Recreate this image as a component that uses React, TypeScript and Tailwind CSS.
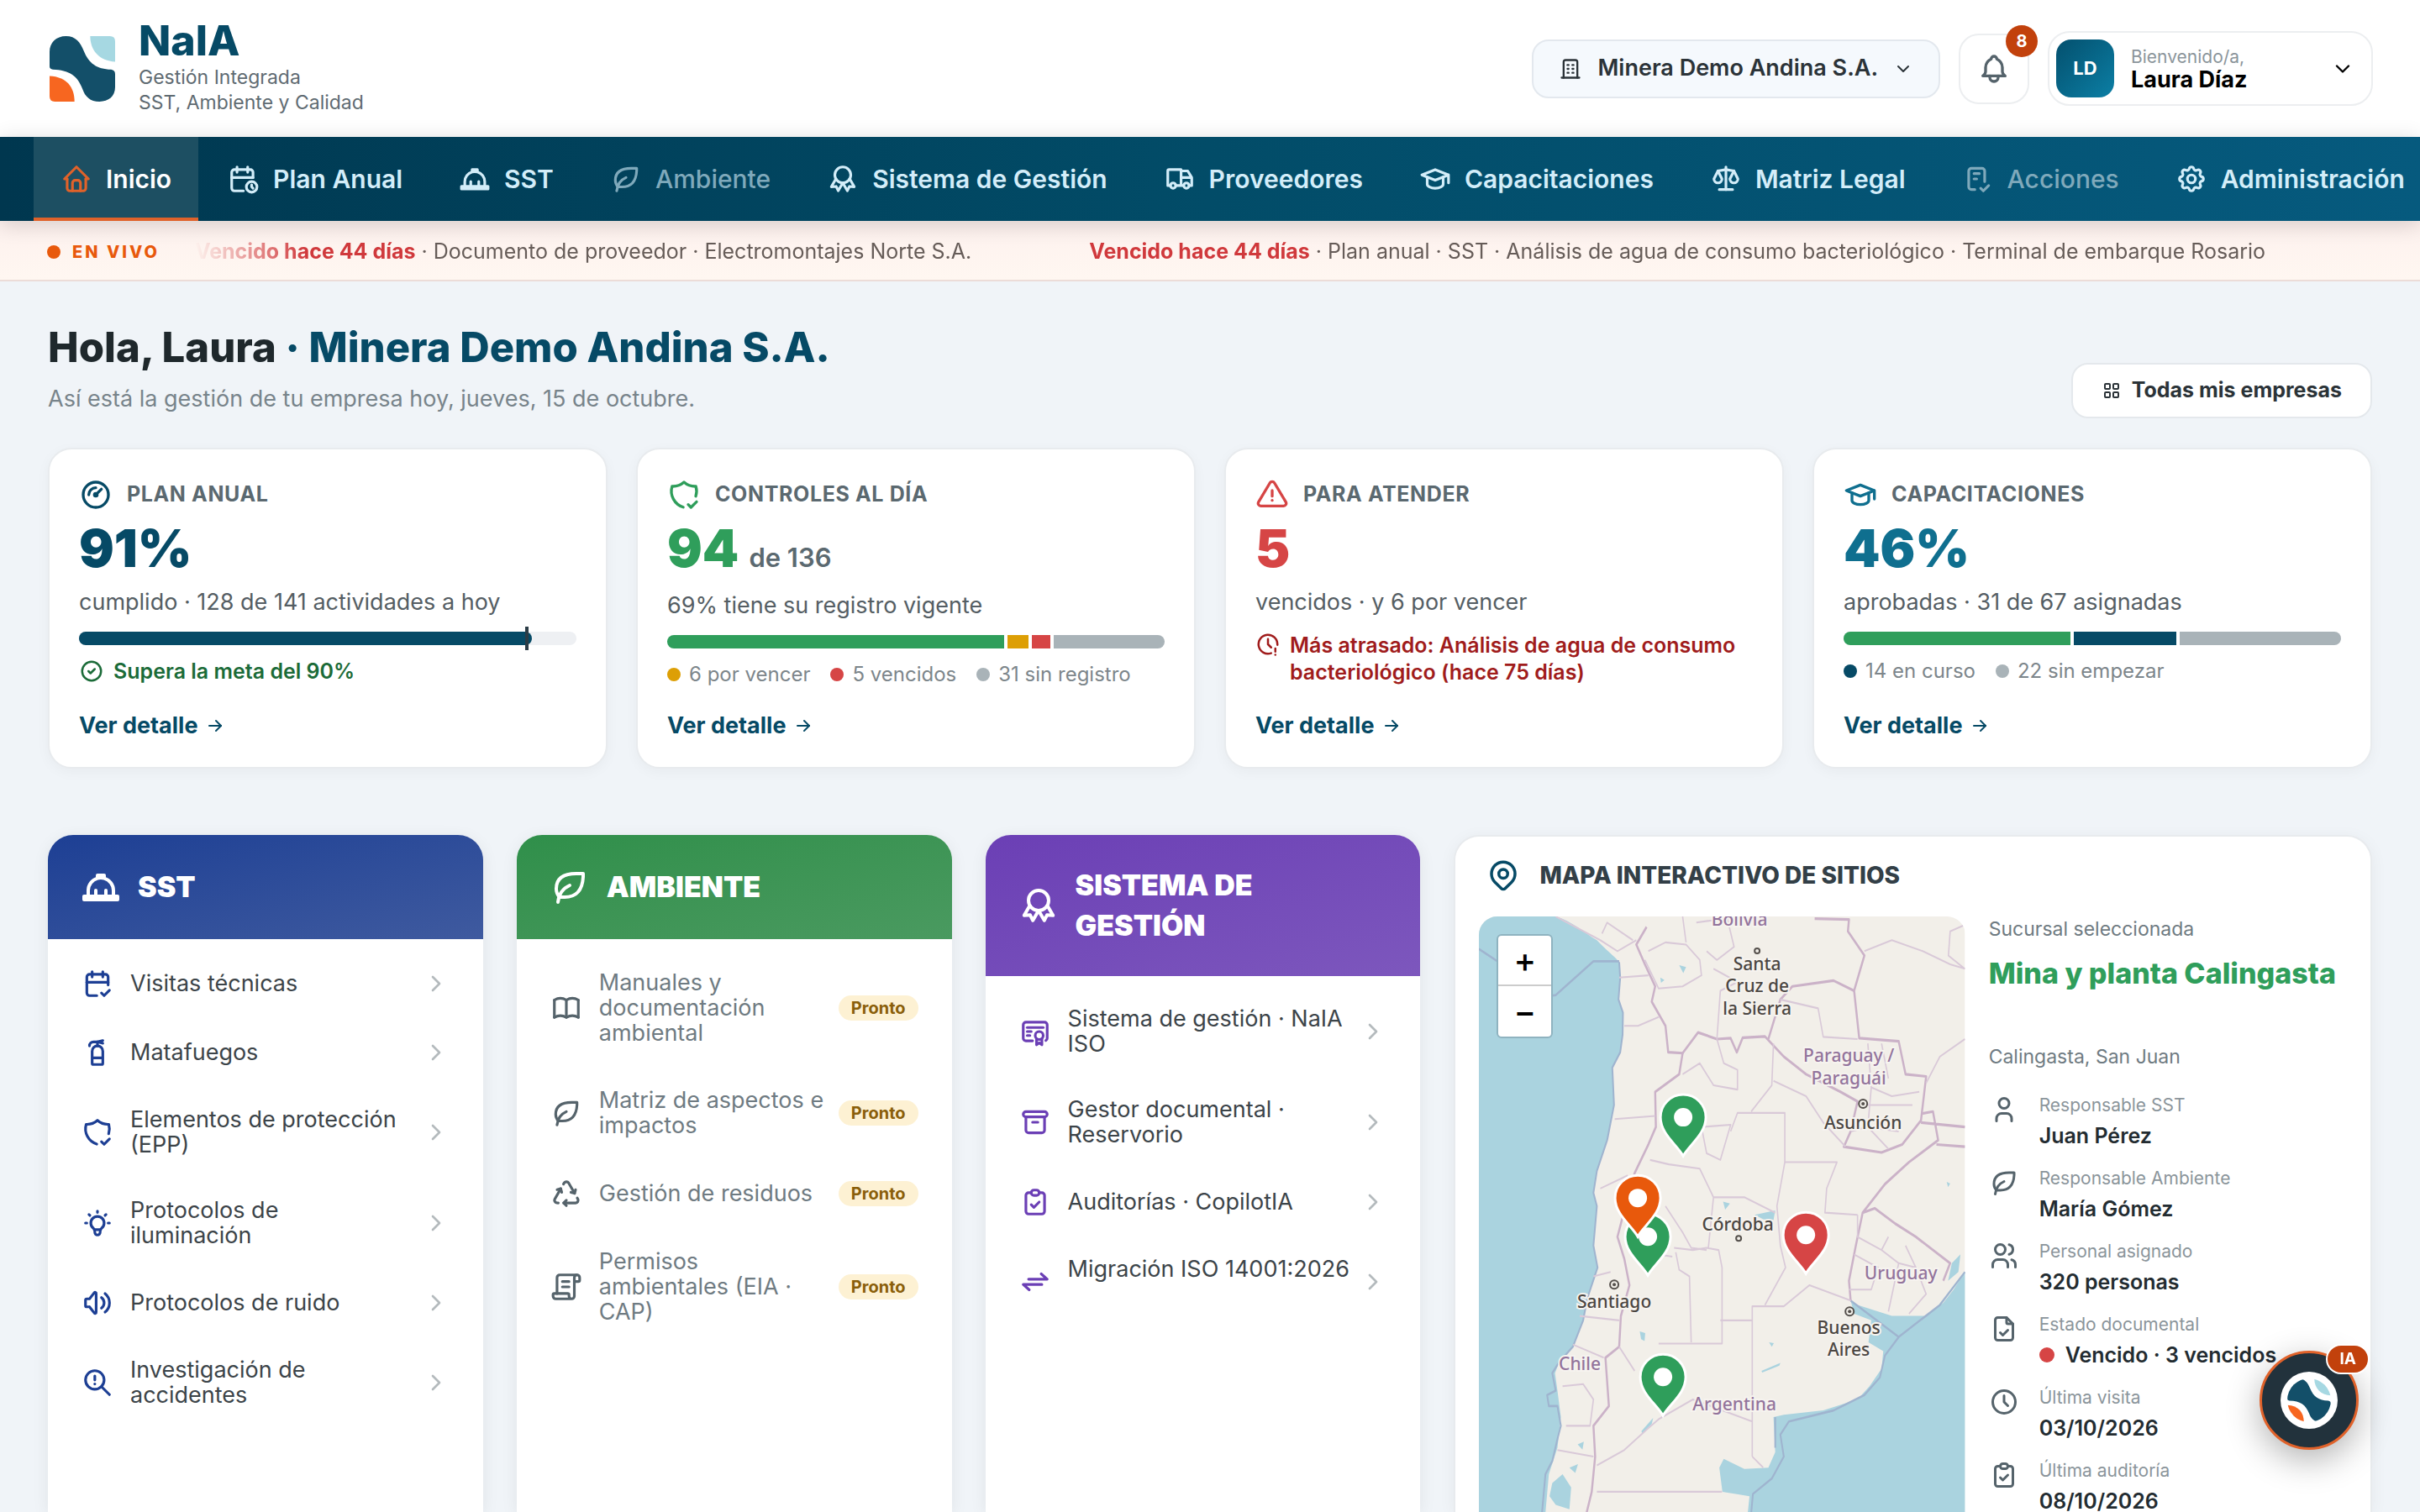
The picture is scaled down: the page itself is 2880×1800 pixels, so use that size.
import React from 'react';
import type { IconType } from 'react-icons';
import { ScrollText } from 'lucide-react';
import {
  TbAlertTriangle, TbArchive, TbArrowRight, TbAward, TbBell, TbBook, TbBuilding, TbBulb, TbCalendarCheck,
  TbCalendarTime, TbCertificate, TbChecklist, TbChevronDown, TbChevronRight, TbCircleCheck, TbClipboardCheck,
  TbClock, TbClockExclamation, TbFileCheck, TbFireExtinguisher, TbGauge, TbHome, TbLayoutGrid, TbLeaf, TbMapPin,
  TbRecycle, TbScale, TbSchool, TbSettings, TbShieldCheck, TbTruck, TbUser, TbUsers,
  TbVolume, TbZoomExclamation,
} from 'react-icons/tb';

type IconLike = IconType | React.FC<{ className?: string }>;

const Helmet: React.FC<{ className?: string }> = ({ className }) => (
  <svg viewBox="0 0 24 24" fill="none" stroke="currentColor" strokeWidth={2} strokeLinecap="round" strokeLinejoin="round" className={className}>
    <path d="M2 17.5h20v2h-20z" />
    <path d="M4.5 17.5v-3.5a7.5 7.5 0 0 1 5.5 -7.2a8 8 0 0 1 4 0a7.5 7.5 0 0 1 5.5 7.2v3.5" />
    <path d="M10 6.5v-1.5h4v1.5" />
    <path d="M9 17v-3" />
    <path d="M15 17v-3" />
  </svg>
);

const Exchange: React.FC<{ className?: string }> = ({ className }) => (
  <svg viewBox="0 0 24 24" fill="none" stroke="currentColor" strokeWidth={2} strokeLinecap="round" strokeLinejoin="round" className={className}>
    <path d="M7 10h14l-4.5 -4" />
    <path d="M17 14h-14l4.5 4" />
  </svg>
);

const Scroll: React.FC<{ className?: string }> = ({ className }) => (
  <span className={className}>
    <ScrollText className="size-full -scale-x-100" />
  </span>
);

const LogoMark: React.FC<{ className?: string }> = ({ className }) => (
  <svg viewBox="0 0 100 100" className={className}>
    <path fill="#134f69" d="M0 24C0 10 10 0 25 0C40 0 47 10 52 22C60 42 72 50 94 51Q100 52 100 58V78C100 92 90 100 76 100C62 100 54 92 50 80C42 60 30 52 5 51Q0 50 0 46Z" />
    <path fill="#a6d8e2" d="M62 0H92Q100 0 100 8V39C76 38 62 22 62 0Z" />
    <path fill="#f76620" d="M0 61C26 62 38 78 38 100H8Q0 100 0 92Z" />
  </svg>
);

const navItems: { label: string; icon: IconLike; active?: boolean; muted?: boolean }[] = [
  { label: 'Inicio', icon: TbHome, active: true },
  { label: 'Plan Anual', icon: TbCalendarTime },
  { label: 'SST', icon: Helmet },
  { label: 'Ambiente', icon: TbLeaf, muted: true },
  { label: 'Sistema de Gestión', icon: TbAward },
  { label: 'Proveedores', icon: TbTruck },
  { label: 'Capacitaciones', icon: TbSchool },
  { label: 'Matriz Legal', icon: TbScale },
  { label: 'Acciones', icon: TbChecklist, muted: true },
  { label: 'Administración', icon: TbSettings },
];

const Header: React.FC = () => (
  <header className="flex h-[163px] shrink-0 items-center justify-between bg-white pr-14 pl-[59px]">
    <a href="#" className="flex items-center gap-7">
      <LogoMark className="size-[78px]" />
      <div className="pb-2">
        <p className="text-[50px] leading-[58px] font-extrabold text-[#064a66]">NaIA</p>
        <p className="text-[23px] leading-[30px] text-[#5f6b72]">
          Gestión Integrada<br />SST, Ambiente y Calidad
        </p>
      </div>
    </a>
    <div className="flex items-center gap-[22px]">
      <button type="button" className="flex h-[70px] items-center gap-[18px] rounded-[20px] border-2 border-[#e3e8ee] bg-[#f5f9fd] px-[30px] text-[27px] font-semibold text-[#2b3338]">
        <TbBuilding className="size-7" />
        Minera Demo Andina S.A.
        <TbChevronDown className="size-6" />
      </button>
      <button type="button" aria-label="Notificaciones" className="relative flex h-[84px] w-[84px] items-center justify-center rounded-[24px] border-2 border-[#eceef0] bg-white text-[#55636b]">
        <TbBell className="size-10" />
        <span className="absolute -top-3 -right-3 flex size-[38px] items-center justify-center rounded-full bg-[#c2410c] text-[20px] font-bold text-white">8</span>
      </button>
      <button type="button" className="flex h-[89px] w-[387px] items-center rounded-[26px] border-2 border-[#eceef0] bg-white px-2 text-left">
        <span className="flex size-[69px] items-center justify-center rounded-[18px] bg-linear-to-br from-[#04506e] to-[#0c7fa5] text-[22px] font-bold text-white">LD</span>
        <span className="ml-5 flex-1">
          <span className="block text-[21px] leading-[26px] text-[#8b959b]">Bienvenido/a,</span>
          <span className="block text-[27px] leading-[28px] font-bold text-black">Laura Díaz</span>
        </span>
        <TbChevronDown className="mr-3 size-7" />
      </button>
    </div>
  </header>
);

const NavBar: React.FC = () => (
  <nav className="relative z-10 flex h-[100px] shrink-0 gap-[3px] bg-linear-to-r from-[#00374f] via-[#024c68] to-[#065a7e] px-10 shadow-[0_4px_24px_rgba(0,0,0,0.16)]">
    {navItems.map(({ label, icon: Icon, active, muted }) => (
      <a
        key={label}
        href="#"
        className={
          active
            ? 'flex items-center gap-4 bg-[#1d4f62] px-8 text-[30px] font-semibold whitespace-nowrap text-white shadow-[inset_0_-4px_0_#e0622a]'
            : muted
              ? 'flex items-center gap-4 px-8 text-[30px] font-medium whitespace-nowrap text-[#7fa9bb]'
              : 'flex items-center gap-4 px-8 text-[30px] font-semibold whitespace-nowrap text-[#d3edf9]'
        }
      >
        <Icon className={active ? 'size-[38px] text-[#e0622a]' : 'size-[38px]'} />
        {label}
      </a>
    ))}
  </nav>
);

const Ticker: React.FC = () => (
  <div className="flex h-[72px] shrink-0 items-center border-b-2 border-[#ecdcd8] bg-linear-to-b from-[#fdf1ee] to-[#fff7f1] pt-[3px] pl-14">
    <span className="size-4 rounded-full bg-[#e8590c]" />
    <span className="ml-[14px] w-[146px] text-[20px] font-extrabold tracking-[3px] text-[#e8590c]">EN VIVO</span>
    <div className="flex flex-1 gap-[140px] overflow-hidden mask-l-from-95% mask-l-to-100% text-[25px] whitespace-nowrap text-[#665c58]">
      <p><b className="font-bold text-[#d0393c]">Vencido hace 44 días</b> · Documento de proveedor · Electromontajes Norte S.A.</p>
      <p><b className="font-bold text-[#d0393c]">Vencido hace 44 días</b> · Plan anual · SST · Análisis de agua de consumo bacteriológico · Terminal de embarque Rosario</p>
    </div>
  </div>
);

interface StatProps {
  icon: IconLike;
  iconClass: string;
  title: string;
  value: string;
  valueClass: string;
  suffix?: string;
  detail: string;
  children: React.ReactNode;
}

const StatCard: React.FC<StatProps> = ({ icon: Icon, iconClass, title, value, valueClass, suffix, detail, children }) => (
  <article className="flex h-[382px] flex-col rounded-[28px] border-2 border-[#e8ebee] bg-white px-[35px] pt-[34px] pb-[33px] shadow-[0_4px_16px_rgba(0,0,0,0.04)]">
    <h2 className="flex h-10 items-center gap-[17px] text-[25px] font-bold tracking-wide text-[#5b6970]">
      <Icon className={iconClass} />
      {title}
    </h2>
    <p className="flex items-baseline gap-3 pt-2 leading-[72px]">
      <span className={valueClass}>{value}</span>
      {suffix && <span className="text-[31px] leading-[58px] font-semibold text-[#5b6970]">{suffix}</span>}
    </p>
    <p className="pt-3 text-[27px] leading-8 text-[#555e64]">{detail}</p>
    {children}
    <a href="#" className="mt-auto flex items-center gap-2 text-[27px] leading-8 font-bold text-[#064a66]">
      Ver detalle <TbArrowRight className="size-6" />
    </a>
  </article>
);

const Legend: React.FC<{ items: [string, string][] }> = ({ items }) => (
  <div className="flex gap-6 pt-4 text-[24px] leading-[30px] text-[#7d868b]">
    {items.map(([dot, label]) => (
      <span key={label} className="flex items-center gap-[10px]"><i className={dot} />{label}</span>
    ))}
  </div>
);

const Stats: React.FC = () => (
  <section className="grid grid-cols-4 gap-[34px]">
    <StatCard icon={TbGauge} iconClass="size-10 text-[#064a66]" title="PLAN ANUAL" value="91%" valueClass="text-[62px] font-black text-[#064a66]" detail="cumplido · 128 de 141 actividades a hoy">
      <div className="relative mt-[19px] h-4 rounded-full bg-[#eef0f3]">
        <div className="h-4 w-[91%] rounded-full bg-[#064a66]" />
        <div className="absolute -top-[6px] left-[90%] h-7 w-1 -translate-x-1/2 bg-[#2b3c46]" />
      </div>
      <p className="flex items-center gap-[11px] pt-4 text-[25px] leading-[30px] font-semibold text-[#1b6b38]">
        <TbCircleCheck className="size-[30px]" />Supera la meta del 90%
      </p>
    </StatCard>
    <StatCard icon={TbShieldCheck} iconClass="size-10 text-[#2f9e5b]" title="CONTROLES AL DÍA" value="94" valueClass="text-[62px] font-black text-[#2f9e5b]" suffix="de 136" detail="69% tiene su registro vigente">
      <div className="mt-[19px] flex h-4 gap-1 overflow-hidden rounded-full">
        <div className="flex-[94] bg-[#2f9e5b]" />
        <div className="flex-[6] bg-[#dd9f05]" />
        <div className="flex-[5] bg-[#d64545]" />
        <div className="flex-[31] bg-[#a9b3b8]" />
      </div>
      <Legend
        items={[
          ['size-4 rounded-full bg-[#dd9f05]', '6 por vencer'],
          ['size-4 rounded-full bg-[#d64545]', '5 vencidos'],
          ['size-4 rounded-full bg-[#a9b3b8]', '31 sin registro'],
        ]}
      />
    </StatCard>
    <StatCard icon={TbAlertTriangle} iconClass="size-10 text-[#d64545]" title="PARA ATENDER" value="5" valueClass="text-[62px] font-black text-[#d64545]" detail="vencidos · y 6 por vencer">
      <p className="flex gap-[11px] pt-[19px] text-[25px] leading-8 font-semibold text-[#a01c1c]">
        <TbClockExclamation className="size-[30px] shrink-0" />
        Más atrasado: Análisis de agua de consumo bacteriológico (hace 75 días)
      </p>
    </StatCard>
    <StatCard icon={TbSchool} iconClass="size-10 text-[#0f6f8f]" title="CAPACITACIONES" value="46%" valueClass="text-[62px] font-black text-[#0f6f8f]" detail="aprobadas · 31 de 67 asignadas">
      <div className="mt-[19px] flex h-4 gap-1 overflow-hidden rounded-full">
        <div className="flex-[31] bg-[#2f9e5b]" />
        <div className="flex-[14] bg-[#064a66]" />
        <div className="flex-[22] bg-[#a9b3b8]" />
      </div>
      <Legend
        items={[
          ['size-4 rounded-full bg-[#064a66]', '14 en curso'],
          ['size-4 rounded-full bg-[#a9b3b8]', '22 sin empezar'],
        ]}
      />
    </StatCard>
  </section>
);

type ModuleItem = { icon: IconLike; label: React.ReactNode };

interface ModuleProps {
  title: string;
  icon: IconLike;
  headClass: string;
  iconClass: string;
  items: ModuleItem[];
  soon?: boolean;
}

const ModuleCard: React.FC<ModuleProps> = ({ title, icon: HeadIcon, headClass, iconClass, items, soon }) => (
  <article className="overflow-hidden rounded-t-[30px] bg-white shadow-[0_4px_20px_rgba(0,0,0,0.07)]">
    <h2 className={headClass}>
      <HeadIcon className="size-12 shrink-0" />
      <span className="w-[270px]">{title}</span>
    </h2>
    <ul className="px-10 pt-3">
      {items.map(({ icon: Icon, label }, i) => (
        <li key={i}>
          <a
            href="#"
            className={
              soon
                ? 'flex min-h-[82px] items-center gap-5 py-[25px] text-[27px] leading-[30px] text-[#6f7b82]'
                : 'flex min-h-[82px] items-center gap-5 py-6 text-[27px] leading-[30px] text-[#3c4449]'
            }
          >
            <Icon className={iconClass} />
            <span className="flex-1 whitespace-nowrap">{label}</span>
            {soon ? (
              <span className="-ml-3 rounded-full bg-[#fdf1d3] px-[15px] text-[20px] font-bold text-[#8a5f0a]">Pronto</span>
            ) : (
              <TbChevronRight className="-my-2 -ml-4 size-8 shrink-0 text-[#b4babd]" />
            )}
          </a>
        </li>
      ))}
    </ul>
  </article>
);

const sstItems: ModuleItem[] = [
  { icon: TbCalendarCheck, label: 'Visitas técnicas' },
  { icon: TbFireExtinguisher, label: 'Matafuegos' },
  { icon: TbShieldCheck, label: <>Elementos de protección<br />(EPP)</> },
  { icon: TbBulb, label: <>Protocolos de<br />iluminación</> },
  { icon: TbVolume, label: 'Protocolos de ruido' },
  { icon: TbZoomExclamation, label: <>Investigación de<br />accidentes</> },
];

const ambienteItems: ModuleItem[] = [
  { icon: TbBook, label: <>Manuales y<br />documentación<br />ambiental</> },
  { icon: TbLeaf, label: <>Matriz de aspectos e<br />impactos</> },
  { icon: TbRecycle, label: 'Gestión de residuos' },
  { icon: Scroll, label: <>Permisos<br />ambientales (EIA ·<br />CAP)</> },
];

const gestionItems: ModuleItem[] = [
  { icon: TbCertificate, label: <>Sistema de gestión · NaIA<br />ISO</> },
  { icon: TbArchive, label: <>Gestor documental ·<br />Reservorio</> },
  { icon: TbClipboardCheck, label: 'Auditorías · CopilotIA' },
  { icon: Exchange, label: <>Migración ISO 14001:2026<br />&nbsp;</> },
];

const pins = [
  { x: 243, y: 239, color: '#2f9e5b' },
  { x: 201, y: 381, color: '#2f9e5b' },
  { x: 189, y: 335, color: '#e8590c' },
  { x: 389, y: 379, color: '#d64545' },
  { x: 219, y: 548, color: '#2f9e5b' },
];

const places = [
  { x: 310, y: 11, text: 'Bolivia', country: true },
  { x: 331, y: 64, text: 'Santa' },
  { x: 331, y: 90, text: 'Cruz de' },
  { x: 331, y: 117, text: 'la Sierra' },
  { x: 440, y: 173, text: 'Paraguay /', country: true },
  { x: 440, y: 200, text: 'Paraguái', country: true },
  { x: 457, y: 253, text: 'Asunción' },
  { x: 308, y: 374, text: 'Córdoba' },
  { x: 502, y: 432, text: 'Uruguay', country: true },
  { x: 161, y: 466, text: 'Santiago' },
  { x: 440, y: 497, text: 'Buenos' },
  { x: 440, y: 523, text: 'Aires' },
  { x: 120, y: 540, text: 'Chile', country: true },
  { x: 304, y: 588, text: 'Argentina', country: true },
];

const SiteMap: React.FC = () => (
  <svg viewBox="0 0 578 709" preserveAspectRatio="xMinYMin slice" className="absolute inset-0 h-full w-full font-['Noto_Sans']">
    <rect width="578" height="709" fill="#f2efe9" />
    <g transform="scale(.408 .523) translate(-96 -211)" fill="none" strokeLinejoin="round">
      {/* Pacific and Atlantic */}
      <path fill="#aad3df" d="M96 211H320C370 222 405 250 440 265C470 290 490 300 505 315L508 350L503 400L516 430L515 480L508 520L485 555L490 640L470 720L440 790L430 840L440 870L430 960L442 1010L412 1080L400 1130L370 1190L330 1225L318 1250L325 1290L335 1350L325 1420L300 1480L290 1568H96Z" />
      <path fill="#aad3df" d="M1513 1020L1480 1060L1450 1090L1400 1120L1300 1120L1200 1095L1180 1085L1190 1115L1240 1130L1232 1180L1275 1200L1270 1240L1235 1280L1200 1310L1100 1335L985 1345L955 1350L960 1430L940 1465L870 1468L810 1445L797 1465L806 1520L885 1530L880 1568H1513Z" />
      <g fill="#aad3df">
        <path d="M310 1500l30 -20l25 30l-5 50l-40 -10l-18 -20zM360 1465l25 -8l-8 20zM384 1412l18 -6l-4 18zM900 890l60 -10l-5 22l-30 -2zM808 860l20 4l-14 14zM565 1155l16 4l-2 18l-10 -4zM920 1245l55 -18l-3 6l-50 16zM570 1382l34 -30l-4 14l-28 22zM942 1180l14 2l-6 8zM625 350l12 6l-10 6zM680 322l20 4l-8 14zM1475 1000l25 -20l-6 40l-30 20zM1460 815l10 4l-6 8z" />
      </g>
      <g stroke="#9fb4cf" strokeWidth="5">
        <path d="M505 315L508 350L503 400L516 430L515 480L508 520L485 555L490 640L470 720L440 790L430 840L440 870L430 960L442 1010L412 1080L400 1130L370 1190L330 1225L310 1250L320 1290L295 1300L300 1325L325 1325L335 1370L325 1400L310 1450L290 1480L280 1568" />
        <path d="M96 285L150 313M300 392L320 390L430 313H505M1513 1020L1440 1095L1320 1168L1280 1210L1265 1260L1220 1300L1130 1335L1000 1360L975 1390L985 1440L950 1490L895 1525L890 1568M1180 1085L1320 1168M960 1350L960 1420" />
      </g>
      {/* Country borders */}
      <g stroke="#cbb2c8" strokeWidth="6">
        <path d="M585 235L555 275L580 320L610 370L600 405L640 460L648 520L690 522L735 475L790 490L830 488L848 520L865 487L930 484L985 530L1050 570L1150 610L1200 632L1180 700L1160 735L1270 748L1330 730L1385 675L1400 575L1340 570L1320 495L1205 488L1190 380L1220 300L1172 245L1175 218L1075 216" />
        <path d="M940 490L975 400L1010 370L1130 357L1190 380M690 522L680 570L610 610L612 690L590 730L550 795L520 880L500 940L520 990L535 1050L510 1120L505 1190L465 1215L475 1325L430 1370L435 1440L425 1520L410 1568" />
        <path d="M1385 660L1420 655L1435 720L1350 770L1280 820L1215 885L1195 960L1175 1040L1180 1085M1215 885L1250 875L1310 910L1370 940L1470 1000L1450 1040M1430 730L1513 735M1385 680L1513 690" />
      </g>
      {/* Provinces */}
      <g stroke="#d9c9d8" strokeWidth="4">
        <path d="M320 211L450 265L500 290L555 265M455 250L470 225L545 265M590 290L640 270L700 275L740 310L745 345L690 370L620 375L580 310M505 350L590 345M520 460L560 460L620 440M690 211L700 270M730 225L820 215L840 280L790 310L760 290M790 490L800 380L850 360L780 330M975 400L1085 420L1100 485L1200 490M1220 290L1300 265L1390 290L1470 320L1513 330M1513 230L1470 245L1465 300L1513 330" />
        <path d="M492 672L610 665M450 830L530 800M690 570L740 545L780 595L850 605L850 560L810 545L790 490M955 500L950 595L890 655M955 585L1050 620L1100 680L1165 735M830 700L850 658H988V770L965 870L975 960L990 1010L930 1095M988 770H1140L1110 830L1105 885L1200 890M745 690L830 685L800 765L760 750ZM595 765L650 775L740 785L780 850L870 850L960 885M640 870L690 930L715 965L760 970M665 965L720 970L760 965L795 970L805 1010V1183H620M535 970L660 985M670 975L680 1015L710 1030L715 1180M780 850L765 965M800 1130H892M893 1440V1098H985L1060 1050L1180 1085M893 1440L925 1465M893 1360L720 1310L620 1355L590 1375L520 1425L440 1460M440 1520H805M505 1190L550 1245M390 1120L505 1130M370 1185L460 1215M340 1280L400 1275L430 1310L420 1370L350 1370M325 1425L430 1440M430 1030L480 1020" />
        <path d="M1200 890L1200 940L1270 970L1290 940M1190 980L1260 1010L1240 1060L1175 1060M1270 970L1320 1000L1290 1110M1340 960L1370 1010L1320 1000M1370 1010L1400 1070L1350 1115M1230 500L1240 600L1300 620L1380 610M1240 600L1230 690L1290 740M1180 700L1230 690L1320 700M1400 590L1440 530L1513 490M1270 500L1290 580M1230 640L1360 640" />
      </g>
    </g>
    <g fill="#f2efe9" stroke="#55504c" strokeWidth="2">
      <circle cx="331" cy="41" r="3" />
      <circle cx="309" cy="383" r="3" />
      <circle cx="457" cy="223" r="5" />
      <circle cx="161" cy="438" r="5" />
      <circle cx="441" cy="470" r="5" />
    </g>
    <g fill="#55504c">
      <circle cx="457" cy="223" r="2" />
      <circle cx="161" cy="438" r="2" />
      <circle cx="441" cy="470" r="2" />
    </g>
    <g textAnchor="middle" fontSize="21" stroke="#f6f3ef" strokeWidth="4" paintOrder="stroke">
      {places.map(({ x, y, text, country }) => (
        <text key={text} x={x} y={y} fill={country ? '#93749c' : '#4b4642'} fontWeight={500}>{text}</text>
      ))}
    </g>
    {pins.map(({ x, y, color }) => (
      <g key={`${x}-${y}`} transform={`translate(${x} ${y})`}>
        <path d="M0 46C-7 33 -27 20 -27 0A27 27 0 0 1 27 0C27 20 7 33 0 46Z" fill={color} stroke="#fff" strokeWidth="3" />
        <circle cx="0" cy="0" r="11" fill="#fff" />
      </g>
    ))}
  </svg>
);

const siteFacts: { icon: IconLike; label: string; value: string; alert?: boolean }[] = [
  { icon: TbUser, label: 'Responsable SST', value: 'Juan Pérez' },
  { icon: TbLeaf, label: 'Responsable Ambiente', value: 'María Gómez' },
  { icon: TbUsers, label: 'Personal asignado', value: '320 personas' },
  { icon: TbFileCheck, label: 'Estado documental', value: 'Vencido · 3 vencidos', alert: true },
  { icon: TbClock, label: 'Última visita', value: '03/10/2026' },
  { icon: TbClipboardCheck, label: 'Última auditoría', value: '08/10/2026' },
];

const MapCard: React.FC = () => (
  <article className="flex min-h-0 flex-col rounded-t-[30px] border-2 border-b-0 border-[#e8ebee] bg-white px-7 shadow-[0_4px_20px_rgba(0,0,0,0.05)]">
    <h2 className="flex h-[95px] shrink-0 items-center gap-[22px] pb-1 pl-2 text-[28px] font-extrabold text-[#333f47]">
      <TbMapPin className="size-[42px] text-[#064a66]" />
      MAPA INTERACTIVO DE SITIOS
    </h2>
    <div className="flex min-h-0 flex-1 gap-7">
      <div className="relative w-[56%] overflow-hidden rounded-t-[22px]">
        <SiteMap />
        <div className="absolute top-[21px] left-[21px] flex w-[67px] flex-col rounded-md border-2 border-[#8fb3c0] bg-white text-[40px] leading-none text-black">
          <button type="button" aria-label="Acercar" className="h-[60px] border-b-2 border-[#ccc] font-medium">+</button>
          <button type="button" aria-label="Alejar" className="h-[60px] font-medium">−</button>
        </div>
      </div>
      <div className="flex-1">
        <p className="text-[23px] leading-[30px] text-[#6f7b82]">Sucursal seleccionada</p>
        <p className="pt-4 text-[34px] leading-[44px] font-extrabold whitespace-nowrap text-[#2f9e5b]">Mina y planta Calingasta</p>
        <p className="pt-[62px] text-[23px] leading-[30px] text-[#6f7b82]">Calingasta, San Juan</p>
        <dl className="pt-[28px]">
          {siteFacts.map(({ icon: Icon, label, value, alert }) => (
            <div key={label} className="flex h-[87px] gap-6">
              <Icon className="mt-[2px] size-9 text-[#55636b]" />
              <div>
                <dt className="text-[21px] leading-[30px] text-[#8b959b]">{label}</dt>
                <dd className="flex items-center gap-[13px] pt-[3px] text-[25px] leading-9 font-semibold text-[#232c31]">
                  {alert && <span className="size-[18px] rounded-full bg-[#d64545]" />}
                  {value}
                </dd>
              </div>
            </div>
          ))}
        </dl>
      </div>
    </div>
  </article>
);

const App: React.FC = () => (
  <div className="flex h-screen flex-col overflow-hidden bg-[#f0f4f8] font-['Inter',sans-serif]">
    <Header />
    <NavBar />
    <Ticker />
    <main className="flex min-h-0 flex-1 flex-col px-[57px] pt-[46px]">
      <div className="flex h-[152px] shrink-0 justify-between">
        <div>
          <h1 className="text-[49px] leading-[66px] font-extrabold text-[#1f282c]">
            Hola, Laura <span className="text-[#064a66]">· Minera Demo Andina S.A.</span>
          </h1>
          <p className="pt-[10px] text-[27px] leading-9 text-[#78848b]">Así está la gestión de tu empresa hoy, jueves, 15 de octubre.</p>
        </div>
        <button type="button" className="mt-[51px] flex h-[66px] items-center gap-3 rounded-[20px] border-2 border-[#e4e8ec] bg-white px-[34px] text-[25px] font-bold text-[#2b3338]">
          <TbLayoutGrid className="size-6" />
          Todas mis empresas
        </button>
      </div>
      <Stats />
      <section className="mt-[79px] grid min-h-0 flex-1 grid-cols-[518fr_518fr_518fr_1093fr] gap-10">
        <ModuleCard
          title="SST"
          icon={Helmet}
          headClass="flex items-center gap-5 bg-linear-to-br from-[#1d3f94] to-[#3f5a9f] px-[39px] py-[38px] text-[34px] leading-[48px] font-black text-white"
          iconClass="-my-2 size-[38px] shrink-0 text-[#1d3f94]"
          items={sstItems}
        />
        <ModuleCard
          title="AMBIENTE"
          icon={TbLeaf}
          headClass="flex items-center gap-5 bg-linear-to-br from-[#2f8f4a] to-[#4a9a60] px-[39px] py-[38px] text-[34px] leading-[48px] font-black text-white"
          iconClass="-my-2 size-[38px] shrink-0 text-[#55636b]"
          items={ambienteItems}
          soon
        />
        <ModuleCard
          title="SISTEMA DE GESTIÓN"
          icon={TbAward}
          headClass="flex items-center gap-5 bg-linear-to-br from-[#6b3fb5] to-[#7d57bd] px-[39px] py-[36px] text-[34px] leading-[48px] font-black text-white"
          iconClass="-my-2 size-[38px] shrink-0 text-[#6b3fb5]"
          items={gestionItems}
        />
        <MapCard />
      </section>
    </main>

    {/* Assistant launcher */}
    <button type="button" aria-label="Asistente IA" className="fixed right-[73px] bottom-[74px] z-20 flex size-[118px] items-center justify-center rounded-full border-[3px] border-[#e0622a] bg-[#22323c] shadow-[0_12px_40px_rgba(0,0,0,0.3)]">
      <span className="flex size-[68px] items-center justify-center rounded-full bg-white">
        <LogoMark className="size-[52px] rounded-full" />
      </span>
      <span className="absolute -top-[11px] -right-4 rounded-full border-2 border-white bg-[#c2410c] px-[14px] text-[19px] leading-[32px] font-bold text-white">IA</span>
    </button>
  </div>
);

export default App;
